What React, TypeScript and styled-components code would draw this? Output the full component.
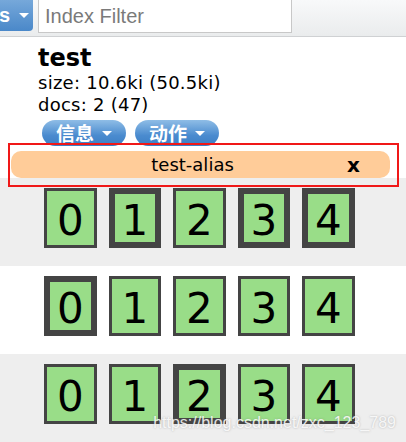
import styled, { createGlobalStyle } from "styled-components";

const GlobalStyle = createGlobalStyle`
  html, body {
    margin: 0;
    padding: 0;
    background: #ffffff;
  }
  body {
    font-family: "DejaVu Sans", Verdana, sans-serif;
    color: #000;
  }
`;

const rows = [
  { shade: true, thick: [1, 3, 4] },
  { shade: false, thick: [0] },
  { shade: true, thick: [2] },
];

const App = () => {
  return (
    <Page>
      <GlobalStyle />
      <TopBar>
        <MenuBtn>
          <span>s</span>
          <Caret />
        </MenuBtn>
        <FilterInput placeholder="Index Filter" />
      </TopBar>
      <Info>
        <h1>test</h1>
        <p>size: 10.6ki (50.5ki)</p>
        <p>docs: 2 (47)</p>
        <BtnRow>
          <PillBtn>
            信息 <Caret />
          </PillBtn>
          <PillBtn>
            动作 <Caret />
          </PillBtn>
        </BtnRow>
      </Info>
      {rows.map((row, i) => (
        <ShardRow key={i} $shade={row.shade}>
          {[0, 1, 2, 3, 4].map((n) => (
            <Shard key={n} $thick={row.thick.includes(n)}>
              {n}
            </Shard>
          ))}
        </ShardRow>
      ))}
      <AliasBox>
        <AliasPill>
          <span className="name">test-alias</span>
          <span className="close">x</span>
        </AliasPill>
      </AliasBox>
      <Watermark>https://blog.csdn.net/zxc_123_789</Watermark>
    </Page>
  );
};

const Page = styled.div`
  position: relative;
  width: 406px;
  height: 442px;
  overflow: hidden;
`;

const TopBar = styled.div`
  height: 36px;
  display: flex;
  align-items: flex-start;
  gap: 5px;
  background: linear-gradient(#f8f9fa, #eaeced);
  border-bottom: 1px solid #cfd1d3;
`;

const MenuBtn = styled.div`
  width: 33px;
  height: 31px;
  box-sizing: border-box;
  display: flex;
  align-items: center;
  gap: 9px;
  background: linear-gradient(#76a8da, #4a88c9);
  border-bottom-right-radius: 4px;
  color: #fff;
  font-family: "Liberation Sans", Arial, sans-serif;
  font-weight: bold;
  font-size: 20px;
  span {
    margin-left: -1px;
  }
`;

const Caret = styled.i`
  display: inline-block;
  width: 0;
  height: 0;
  border-left: 5px solid transparent;
  border-right: 5px solid transparent;
  border-top: 5px solid #fff;
  vertical-align: middle;
`;

const FilterInput = styled.input`
  width: 254px;
  height: 33px;
  box-sizing: border-box;
  margin: 0;
  padding: 0 6px;
  border: 1px solid #c8c8c8;
  border-top: none;
  background: #fff;
  font-family: "Liberation Sans", Arial, sans-serif;
  font-size: 20px;
  outline: none;
  &::placeholder {
    color: #7a7a7a;
  }
`;

const Info = styled.div`
  height: 141px;
  box-sizing: border-box;
  padding: 7px 0 0 38px;
  h1 {
    margin: 0;
    font-size: 24px;
    line-height: 28px;
    font-weight: bold;
  }
  p {
    margin: 0;
    font-size: 18px;
    line-height: 22px;
    letter-spacing: 0.25px;
  }
`;

const BtnRow = styled.div`
  display: flex;
  gap: 9px;
  margin: 4px 0 0 4px;
`;

const PillBtn = styled.div`
  width: 84px;
  height: 26px;
  box-sizing: border-box;
  display: flex;
  align-items: center;
  justify-content: center;
  gap: 8px;
  border-radius: 13px;
  background: linear-gradient(#8fbde6, #4a8bcf 60%, #3d7fc4);
  color: #fff;
  font-family: "Noto Sans CJK SC", sans-serif;
  font-weight: bold;
  font-size: 19px;
  line-height: 26px;
`;

const ShardRow = styled.div<{ $shade: boolean }>`
  height: 88px;
  box-sizing: border-box;
  padding: 10px 0 0 44px;
  display: flex;
  gap: 12px;
  background: ${({ $shade }) => ($shade ? "#eeeeee" : "#ffffff")};
`;

const Shard = styled.div<{ $thick: boolean }>`
  width: 52.5px;
  height: 60px;
  box-sizing: border-box;
  display: flex;
  align-items: center;
  justify-content: center;
  padding-top: 6px;
  border: ${({ $thick }) => ($thick ? "6px" : "3px")} solid #444444;
  background: #99dd88;
  font-family: "DejaVu Sans", Verdana, sans-serif;
  font-size: 42px;
  line-height: 1;
`;

const AliasBox = styled.div`
  position: absolute;
  left: 8px;
  top: 143px;
  width: 391px;
  height: 44px;
  box-sizing: border-box;
  border: 2px solid #f01818;
  padding: 6px 7px 0 1px;
`;

const AliasPill = styled.div`
  height: 27px;
  display: flex;
  align-items: center;
  border-radius: 10px;
  background: #ffcc99;
  font-size: 18px;
  .name {
    flex: 1;
    text-align: center;
    padding-left: 27px;
  }
  .close {
    margin-right: 30px;
    font-size: 20px;
    font-weight: bold;
  }
`;

const Watermark = styled.div`
  position: absolute;
  right: 10px;
  bottom: 10px;
  font-family: "Liberation Sans", Arial, sans-serif;
  font-size: 16px;
  color: rgba(255, 255, 255, 0.85);
  text-shadow: 0 0 2px rgba(120, 120, 120, 0.5);
`;

export default App;
